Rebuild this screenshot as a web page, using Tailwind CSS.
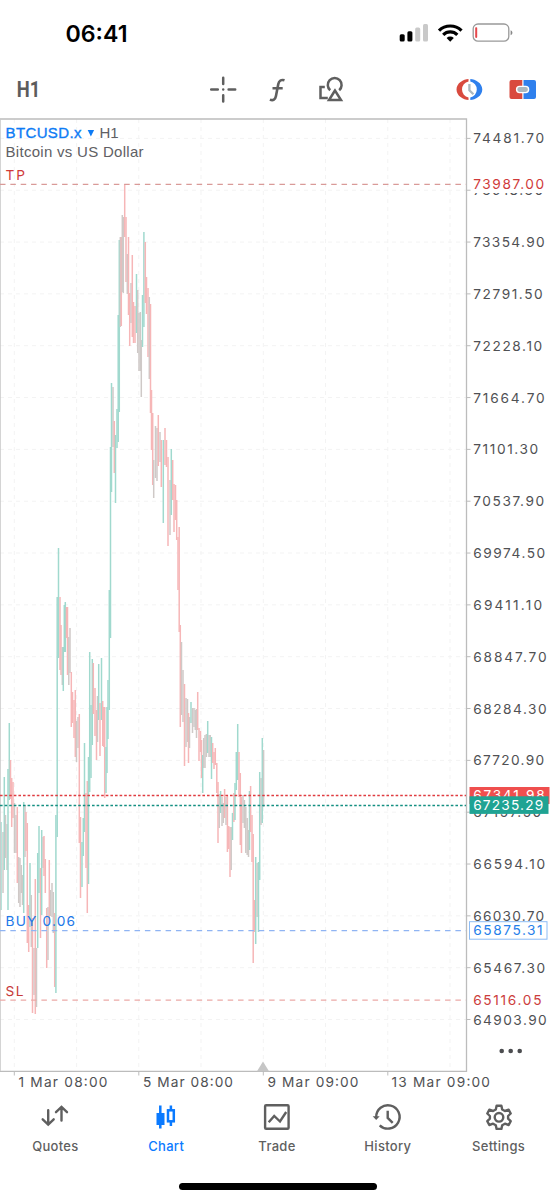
<!DOCTYPE html>
<html lang="en">
<head>
<meta charset="utf-8">
<title>BTCUSD.x H1</title>
<script src="https://cdn.jsdelivr.net/npm/@tailwindcss/browser@4"></script>
</head>
<body class="w-[555px] h-[1200px] overflow-hidden bg-white font-['Inter','Liberation_Sans',sans-serif] text-[#5f5f5f] flex flex-col">

<!-- status bar -->
<header class="h-[60px] shrink-0 flex justify-between pl-[65px] pr-[41px] pt-[18px]">
  <svg class="w-[66px] h-[32px] overflow-visible" viewBox="0 0 66 32"><text x="0.500" y="23.5" font-size="23" font-weight="600" fill="#000" textLength="62" lengthAdjust="spacingAndGlyphs">06:41</text></svg>
  <svg class="w-[115px] h-[32px]" viewBox="399 18 115 32" fill="none">
    <g fill="#000"><rect x="399.7" y="34.3" width="5" height="7.3" rx="1.5"/><rect x="407.4" y="31.3" width="5" height="10.3" rx="1.5"/></g>
    <g fill="#c9c9c9"><rect x="415.2" y="27.5" width="5" height="14.1" rx="1.5"/><rect x="423" y="24" width="5" height="17.6" rx="1.5"/></g>
    <g stroke="#000" stroke-width="3.2"><path d="M439 30.6a16 16 0 0 1 22.5 0"/><path d="M443.2 34.8a10 10 0 0 1 14.1 0"/></g>
    <path d="M446.6 38a5.2 5.2 0 0 1 7.2 0L450.2 41.7Z" fill="#000"/>
    <rect x="473.2" y="24" width="35.6" height="17.2" rx="4.8" stroke="#999" stroke-width="1.3"/>
    <rect x="475.2" y="27.3" width="2" height="10.6" rx=".8" fill="#e5484d"/>
    <path d="M510.6 30.2c2.4.7 2.4 4.300 0 5Z" fill="#888"/>
  </svg>
</header>

<!-- toolbar -->
<nav class="h-[58px] shrink-0 flex">
  <svg class="w-[555px] h-[58px]" viewBox="0 60 555 58" fill="none" stroke="#5f5f5f" stroke-width="2.500">
    <text x="16.700" y="96.700" font-family="Roboto" font-weight="700" font-size="22" fill="#5c5c5c" stroke="none" textLength="23.500" lengthAdjust="spacingAndGlyphs">H1</text>
    <path stroke-linecap="round" d="M223.200 77.800v6.200M223.200 95.200v6.200M211.200 89.500h6.600M228.600 89.500h6.600"/><circle cx="223.200" cy="89.500" r="1.200" fill="#5f5f5f" stroke="none"/>
    <path stroke-width="2.600" d="M284.500 80.300c-3.300-1.100-5.500.4-6.200 3.800l-2.400 12.200c-.6 3.200-2.700 4.700-6 3.300M272.500 88.300h10.200"/>
    <path d="M324.800 87h-4.300v11h7.300M330.200 90.200a6.900 6.900 0 1 1 9 0M335 90.500l-6 9.600h12Z"/>
    <path fill="#d94a3e" stroke="none" d="M468.500 79v2.400a8.300 8.300 0 0 0 0 16.200v2.400c-5-.2-12-4-12-10.500s7-10.300 12-10.500Z"/>
    <path fill="#2f80ed" stroke="none" d="M470.300 79v2.400a8.300 8.300 0 0 1 0 16.200v2.400c5-.2 12-4 12-10.500s-7-10.300-12-10.500Z"/>
    <path stroke="#abb8bf" stroke-width="2.300" d="M469.400 84v6.200l4 4"/>
    <path fill="#d94a3e" stroke="none" d="M511.500 80h10.800v19h-10.800a2 2 0 0 1-2-2v-15a2 2 0 0 1 2-2Z"/><path fill="#2f80ed" stroke="none" d="M523.500 80h10.500a2 2 0 0 1 2 2v15a2 2 0 0 1-2 2h-10.500Z"/>
    <rect x="516.600" y="86.400" width="12" height="6.200" rx="3" fill="#abb8bf" stroke="#fff" stroke-width="1.400"/>
  </svg>
</nav>

<!-- price chart -->
<main class="h-[980px] shrink-0">
  <svg id="chart" class="w-[555px] h-[980px] block" viewBox="0 118 555 980" fill="none">
    <g id="grid" stroke="#f3f3f3" stroke-width="1" stroke-dasharray="4 4"></g>
    <g id="bars" stroke-width="1.500"></g>
    <path d="M0 119H466.500V1071.300H0" stroke="#bcbcbc" stroke-width="1.300"/><path d="M.4 119V1071" stroke="#c8c8c8" stroke-width=".9"/>
    <path d="M0 184.300H466" stroke="#d99a98" stroke-width="1.200" stroke-dasharray="5.500 4.850"/>
    <path d="M0 1000.200H466" stroke="#eba9a7" stroke-width="1.200" stroke-dasharray="5.500 4.850"/>
    <path d="M0 930.700H466" stroke="#8fb4f3" stroke-width="1.200" stroke-dasharray="5.500 4.850"/>
    <path d="M0 795.500H466" stroke="#e03c41" stroke-width="1.300" stroke-dasharray="2.600 2"/>
    <path d="M0 805.500H466" stroke="#149082" stroke-width="1.300" stroke-dasharray="2.600 2"/>
    <path d="M263 1061.500l6 9.800h-12Z" fill="#c6c6c6"/>
    <g id="axis" font-size="13.700" fill="#505154"></g>
    <g font-family="Liberation Sans" font-size="15">
      <text x="5.500" y="137.500" fill="#0d7bf5" stroke="#0d7bf5" stroke-width=".35" textLength="76">BTCUSD.x</text>
      <path d="M87.700 130h6.400l-3.200 6.500Z" fill="#0d7bf5"/>
      <text x="99.500" y="137.500" fill="#606064" textLength="19">H1</text>
      <text x="5.500" y="156.500" fill="#606064" textLength="138">Bitcoin vs US Dollar</text>
    </g>
    <g font-size="13.700">
      <text x="5.500" y="179.700" fill="#d03a3a" textLength="19.500">TP</text>
      <text x="5.500" y="926" fill="#2177e8" textLength="69.500">BUY 0.06</text>
      <text x="5.500" y="996" fill="#c73a3a" textLength="18">SL</text>
    </g>
    <rect x="471" y="176" width="80" height="17" fill="#fff"/>
    <rect x="469.500" y="787" width="80" height="17" fill="#ef4f4e"/>
    <text x="473.200" y="800.300" font-size="13.700" fill="#fff" textLength="71.500">67341.98</text>
    <rect x="469.500" y="796.300" width="79" height="17.600" fill="#1fa393"/>
    <rect x="469.500" y="921.700" width="77.500" height="17.500" fill="#fff" stroke="#8dbcf5"/>
    <g font-size="13.700">
      <text x="473.200" y="189.200" fill="#d03a3a" textLength="71">73987.00</text>
      <text x="473.200" y="810.200" fill="#fff" textLength="70">67235.29</text>
      <text x="473.200" y="935.400" fill="#2680ea" textLength="69.500">65875.31</text>
      <text x="473.200" y="1005.200" fill="#cc3d3d" textLength="68.300">65116.05</text>
    </g>
    <g fill="#4c4d50"><circle cx="501.700" cy="1051" r="2.300"/><circle cx="510.700" cy="1051" r="2.300"/><circle cx="519.700" cy="1051" r="2.300"/></g>
  </svg>
</main>

<!-- tab bar -->
<footer class="h-[102px] shrink-0 flex flex-col items-center text-[13px] font-medium tracking-[0.3px]">
  <div class="grid grid-cols-5 w-[554px] mr-[1px] h-[84px]">
    <div class="flex flex-col items-center gap-[5px] pt-[4px]">
      <svg class="w-8 h-[30px]" viewBox="0 0 32 30" fill="none" stroke="#5f5f5f" stroke-width="2.400" stroke-linecap="round"><path d="M9.200 8.300v14M3.700 17.300l5.500 5.200 5.500-5.200M22.500 18.500v-13M17 10.200l5.500-5.200 5.500 5.200"/></svg>
      <span>Quotes</span></div>
    <div class="flex flex-col items-center gap-[5px] pt-[4px] text-[#0a7aff]">
      <svg class="w-8 h-[30px]" viewBox="0 0 32 30" fill="none" stroke="#0a7aff" stroke-width="2.500"><path d="M10.300 3.500v23M20.900 3.500v4.500M20.900 19.500v4.500"/><rect x="6.500" y="11" width="8" height="12" fill="#0a7aff" stroke="none"/><rect x="18" y="8.300" width="5.800" height="11"/></svg>
      <span>Chart</span></div>
    <div class="flex flex-col items-center gap-[5px] pt-[4px]">
      <svg class="w-8 h-[30px]" viewBox="0 0 32 30" fill="none" stroke="#5f5f5f" stroke-width="2.400"><rect x="4.100" y="3.200" width="23.500" height="23.500" rx="1"/><path d="M7.700 20.200l5.500-6.200 5.800 5.500 6.200-9.500"/></svg>
      <span>Trade</span></div>
    <div class="flex flex-col items-center gap-[5px] pt-[4px]">
      <svg class="w-8 h-[30px]" viewBox="0 0 32 30" fill="none" stroke="#5f5f5f" stroke-width="2.400"><path d="M4.200 15.200A11.700 11.700 0 1 1 7.700 23.300"/><path d="M.7 14.200h7l-3.500 3.800Z" fill="#5f5f5f" stroke="none"/><path d="M15.700 8.700v7.200l5 5"/></svg>
      <span>History</span></div>
    <div class="flex flex-col items-center gap-[5px] pt-[4px]">
      <svg class="w-8 h-[30px]" viewBox="0 0 32 30" fill="none" stroke="#5f5f5f" stroke-width="2.400" stroke-linejoin="round"><path d="M13.600 3.700h4.800l.8 3.800 2.700 1.500 3.800-1.300 2 3.800-2.600 2.500v2.600l2.600 2.600-2 3.800-3.800-1.300-2.700 1.500-.8 3.700h-4.800l-.8-3.700-2.700-1.500-3.800 1.300-2-3.800 2.600-2.600v-2.600l-2.600-2.500 2-3.800 3.800 1.300 2.700-1.500Z"/><circle cx="16" cy="15.300" r="4.300"/></svg>
      <span>Settings</span></div>
  </div>
  <div class="w-[198px] h-[6.500px] rounded-full bg-black mt-[1px]"></div>
</footer>

<script>
// x, high, low, tone (g rising, r falling, n mixed)
const bars = `1 822 910 g;3 832 893 n;4.3 777 870 g;5.5 815 858 n;7 824 870 n;8 769 910 g;9.3 723 800 g;10.5 760 799 r;11.7 778 827 r;13 782 818 r;14.5 803 853 n;16 815 853 n;17.3 807 883 r;18.7 857 903 n;20 858 907 n;21.3 865 893 n;22.5 875 905 n;23.7 802 913 g;25 805 857 n;26 812 851 r;27.3 823 943 r;28.7 905 952 r;30 863 927 g;31.3 895 947 n;32.5 918 1013 r;34 948 995 n;35.3 879 1014 r;36.5 948 1007 n;37.7 853 948 g;39 826 893 g;40.5 868 938 r;41.7 830 915 g;43 837 868 n;44 836 876 r;45.3 859 893 r;46.7 908 968 r;48 907 960 n;49.3 860 923 r;50.5 890 916 n;52 883 917 n;53.3 892 933 n;54.7 913 987 r;55.9 815 993 g;57.2 597 837 g;58.5 548 658 g;60 597 670 r;61 625 675 r;62.3 647 685 n;63.3 647 691 g;64.3 605 652 g;65.3 602 652 g;66.5 607 638 r;67.5 607 675 r;68.8 637 685 n;70 628 673 n;71.3 672 727 r;72.5 692 723 r;74 700 738 r;75.3 690 757 r;76.5 721 762 n;78 717 748 n;79.3 714 843 r;80.5 817 898 r;82 842 887 g;83.3 818 856 g;84.5 743 832 g;86 793 868 r;87.3 781 913 r;88.5 757 884 g;89.7 652 792 g;91 705 778 g;92.3 659 745 g;93.3 663 714 r;95 688 736 r;96.5 710 760 r;97.5 696 742 n;98.7 664 720 g;100 703 756 r;101.5 658 720 g;102.7 701 746 r;103.8 707 747 r;104.7 707 798 r;106 747 793 g;107 707 773 g;108 680 739 g;109.3 590 710 g;110.5 447 638 g;111.5 383 492 g;113 387 447 n;114.3 421 473 r;115.5 435 503 g;117 409 448 g;118.2 315 442 g;119.3 240 412 g;120.3 237 327 n;121.3 237 326 r;122.3 215 292 n;123.3 217 293 n;124.7 184 237 r;126 217 282 r;127.3 254 294 n;128.5 237 315 r;129.7 293 346 r;131 283 323 n;132.3 255 337 r;133.5 302 343 r;135 306 343 r;136.5 274 333 g;137.7 290 353 n;139 313 371 n;140.3 312 371 n;141.3 340 397 n;142.5 295 347 g;143.9 232 327 g;145.3 242 303 r;146.5 277 314 r;148 288 357 r;149.3 297 379 n;150.5 304 413 r;151.5 390 450 r;152.7 413 485 r;153.7 460 498 n;155.5 426 478 n;157 428 481 n;158.3 415 466 r;160 432 462 n;161.3 440 487 r;163.3 440 523 g;165 428 465 r;166.5 440 467 r;168 457 546 r;170 480 535 n;171.3 449 515 g;172.7 460 500 r;174 484 532 r;175.5 485 520 r;176.7 500 540 r;178 537 590 r;179.2 527 632 r;180.3 625 727 r;181.5 642 715 n;183 670 722 n;184.5 684 766 r;186 698 747 n;187.5 699 742 n;188.5 713 763 r;189.5 717 748 n;191 702 723 g;192.5 708 733 n;194 708 727 n;195.3 710 730 n;196.5 709 738 n;197.7 692 730 r;199 728 761 r;200.5 731 752 r;201.5 740 778 r;202.7 755 793 g;203.7 738 768 n;205 735 768 n;206.4 734 757 n;207.7 721 753 g;209 735 757 n;210.2 735 757 n;211.5 737 779 g;212.7 743 763 r;214 752 769 r;215.3 748 765 r;216.8 763 793 r;218 782 843 r;219.3 794 828 n;220.6 791 813 g;222 797 826 n;223.3 803 823 n;224.6 789 818 r;226 797 825 n;227.4 795 852 r;228.7 826 849 r;230 827 877 r;231.2 827 870 n;232.5 813 840 g;233.9 793 822 r;235 783 820 g;236.3 752 790 g;237.7 724 780 g;239 752 797 r;240.3 773 845 r;241.5 797 853 r;243 795 823 n;244.4 800 828 n;245.8 807 853 n;247.2 818 855 n;248.5 830 857 n;249.5 791 850 g;250.6 786 832 r;252 815 862 r;253.2 834 963 r;254.5 900 932 r;255.7 857 944 g;257.1 863 917 n;258.5 862 932 g;259.7 772 880 g;261 778 825 n;262.3 738 823 g;263.6 750 807 n`;
const tones = { g: '#a0d9ce', r: '#f6b6b7', n: '#cfc9c7' };
const node = (parent, tag, attrs, text) => {
  const e = document.createElementNS('http://www.w3.org/2000/svg', tag);
  for (const k in attrs) e.setAttribute(k, attrs[k]);
  if (text) e.textContent = text;
  document.getElementById(parent).appendChild(e);
};
bars.split(';').forEach(b => {
  const [x, hi, lo, t] = b.split(' ');
  node('bars', 'path', { d: `M${x} ${hi}V${lo}`, stroke: tones[t] });
});
[14.3, 76.6, 138.8, 201, 263.3, 325.5, 387.8, 450].forEach((x, i) => {
  node('grid', 'path', { d: `M${x} 119V1071` });
  if (i % 2 === 0) node('axis', 'path', { d: `M${x} 1071V1075.500`, stroke: '#bcbcbc' });
});
const prices = [['74481.70', 71], ['73918.30', 70], ['73354.90', 71.500], ['72791.50', 69.500], ['72228.10', 69], ['71664.70', 71.500], ['71101.30', 65], ['70537.90', 71], ['69974.50', 72], ['69411.10', 69], ['68847.70', 73.500], ['68284.30', 73.500], ['67720.90', 71], ['67157.50', 68], ['66594.10', 72], ['66030.70', 71], ['65467.30', 72], ['64903.90', 73.500]];
prices.forEach(([p, w], i) => {
  const y = 138.4 + i * 51.83;
  node('grid', 'path', { d: `M0 ${y}H466` });
  node('axis', 'path', { d: `M466.500 ${y}H470.500`, stroke: '#bcbcbc' });
  node('axis', 'text', { x: 473.2, y: y + 5, textLength: w }, p);
});
[['1 Mar 08:00', 18.5, 89], ['5 Mar 08:00', 143, 90], ['9 Mar 09:00', 267.500, 91], ['13 Mar 09:00', 391.500, 98.500]].forEach(([t, x, w]) =>
  node('axis', 'text', { x, y: 1087.400, textLength: w }, t));
</script>
</body>
</html>
